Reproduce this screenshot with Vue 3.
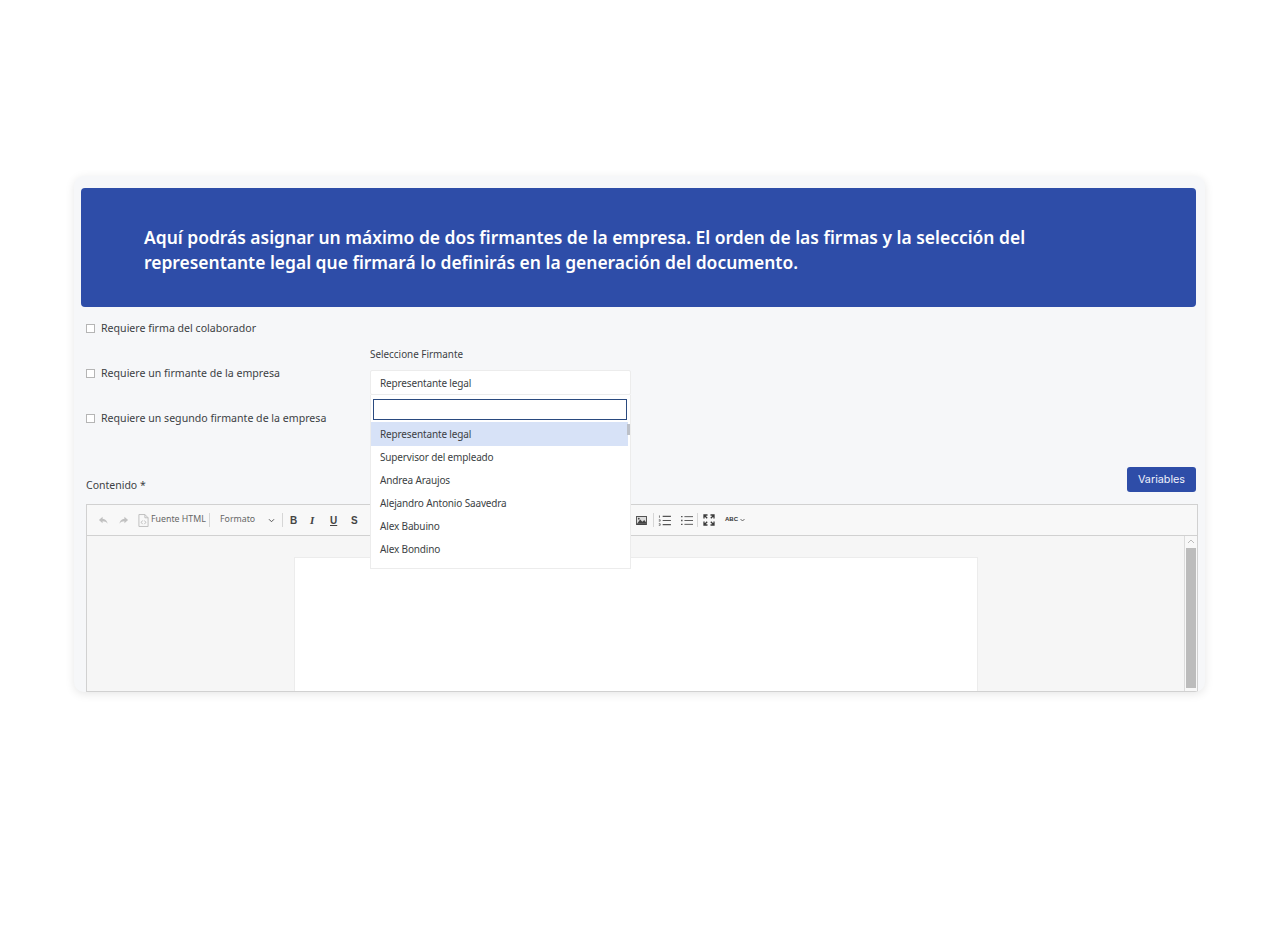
<script setup>
const checks = [
  'Requiere firma del colaborador',
  'Requiere un firmante de la empresa',
  'Requiere un segundo firmante de la empresa'
]
const options = [
  'Representante legal',
  'Supervisor del empleado',
  'Andrea Araujos',
  'Alejandro Antonio Saavedra',
  'Alex Babuino',
  'Alex Bondino'
]
</script>

<template>
  <div class="page">
    <section class="card">
      <div class="banner">
        <p>Aquí podrás asignar un máximo de dos firmantes de la empresa. El orden de las firmas y la selección del representante legal que firmará lo definirás en la generación del documento.</p>
      </div>

      <div class="form">
        <div class="checks">
          <label v-for="c in checks" :key="c" class="check"><span class="box"></span>{{ c }}</label>
        </div>
        <div class="signer">
          <div class="signer-label">Seleccione Firmante</div>
          <div class="select">Representante legal</div>
          <div class="dropdown">
            <div class="search"></div>
            <ul class="list">
              <li v-for="(o, i) in options" :key="o" :class="{ active: i === 0 }">{{ o }}</li>
            </ul>
            <div class="thumb"></div>
          </div>
        </div>
      </div>

      <div class="content-head">
        <span class="content-label">Contenido *</span>
        <button class="variables">Variables</button>
      </div>

      <div class="editor">
        <div class="toolbar">
          <svg class="ic dim" viewBox="0 0 12 12"><path d="M5 2 1 5.500 5 9V6.800c2.400 0 4 .7 5.500 2.700C10 6.300 8 4.400 5 4.200z"/></svg>
          <svg class="ic dim" viewBox="0 0 12 12"><path d="M7 2l4 3.500L7 9V6.800c-2.400 0-4 .7-5.500 2.700C2 6.300 4 4.400 7 4.200z"/></svg>
          <svg class="doc" viewBox="0 0 12 14"><path d="M1 .5h6.500L11 4v9.500H1z M7.500 .5V4H11" fill="none" stroke="#bbb"/><path d="M5 7 3.500 9 5 11M7 7l1.500 2L7 11" fill="none" stroke="#aaa" stroke-width=".8"/></svg>
          <span class="source">Fuente HTML</span>
          <i class="sep s1"></i>
          <span class="format">Formato</span>
          <svg class="chev" viewBox="0 0 8 6"><path d="M1 1.500 4 4.500 7 1.500" fill="none" stroke="#555" stroke-width="1.200"/></svg>
          <i class="sep s2"></i>
          <b class="fmt">B</b>
          <b class="fmt it">I</b>
          <b class="fmt un">U</b>
          <b class="fmt st">S</b>
          <span class="tool-spacer"></span>
          <svg class="img" viewBox="0 0 12 10"><path d="M0 0h12v10H0z" fill="#444"/><path d="M1 1h10v7.500H1z" fill="#ddd"/><path d="M1 8.500 4.500 4 7 6.500l2-2 2 2.500v1.500z" fill="#444"/><circle cx="3" cy="3" r="1" fill="#444"/></svg>
          <i class="sep s3"></i>
          <svg class="list-ic" viewBox="0 0 14 12"><path d="M5 1.500h9M5 6h9M5 10.500h9" stroke="#555" stroke-width="1.100"/><path d="M1.500 .5v2.500M.8 5.200h1.500v1.500H.8M.8 9.500h1.500v1.800H.8" stroke="#555" stroke-width=".8" fill="none"/></svg>
          <svg class="list-ic b2" viewBox="0 0 14 12"><path d="M4 1.500h10M4 6h10M4 10.500h10" stroke="#555" stroke-width="1.100"/><path d="M0 .7h1.800v1.600H0zM0 5.200h1.800v1.600H0zM0 9.700h1.800v1.600H0z" fill="#555"/></svg>
          <i class="sep s4"></i>
          <svg class="max" viewBox="0 0 12 12"><path d="M1 4.500V1h3.500M1 1l3.200 3.200M11 4.500V1H7.500M11 1 7.800 4.200M1 7.500V11h3.500M1 11l3.200-3.200M11 7.500V11H7.500M11 11 7.800 7.800" fill="none" stroke="#3a3a3a" stroke-width="1.300"/></svg>
          <span class="abc">ABC</span>
          <svg class="abc-chev" viewBox="0 0 8 6"><path d="M1 1.500 4 4.500 7 1.500" fill="none" stroke="#444" stroke-width="1.200"/></svg>
        </div>
        <div class="body">
          <div class="sheet-area"><div class="sheet"></div></div>
          <div class="scroll">
            <svg class="up" viewBox="0 0 8 5"><path d="M1 4 4 1 7 4" fill="none" stroke="#bbb"/></svg>
            <div class="bar"></div>
          </div>
        </div>
      </div>
    </section>
  </div>
</template>

<style>
html, body { margin: 0; background: #fff; }
</style>

<style scoped>
.page {
  width: 1280px;
  height: 925px;
  box-sizing: border-box;
  padding: 176px 0 0 74px;
  font-family: "Noto Sans", "Open Sans", sans-serif;
  color: #333;
  overflow: hidden;
}
.card {
  width: 1131px;
  height: 516px;
  box-sizing: border-box;
  padding: 12px 9px 0 7px;
  background: #f6f7f9;
  border-radius: 10px;
  box-shadow: 0 2px 10px rgba(0, 0, 0, .1);
  overflow: hidden;
}
.banner {
  height: 119px;
  box-sizing: border-box;
  padding: 4px 160px 0 63px;
  display: flex;
  align-items: center;
  background: #2e4da8;
  border-radius: 4px;
}
.banner p {
  margin: 0;
  color: #fff;
  font-size: 17.450px;
  font-weight: 600;
  line-height: 25px;
}
.form {
  display: flex;
  height: 160px;
  padding-left: 5px;
}
.checks {
  width: 284px;
  padding-top: 12px;
  display: flex;
  flex-direction: column;
  gap: 27px;
}
.check {
  display: flex;
  align-items: center;
  height: 18px;
  font-size: 10.600px;
  color: #3c3f44;
}
.box {
  width: 7px;
  height: 7px;
  border: 1px solid #b5b5b5;
  background: #fff;
  margin-right: 6px;
}
.signer {
  position: relative;
  width: 261px;
  padding-top: 40px;
}
.signer-label {
  font-size: 9.900px;
  line-height: 15px;
  color: #3c3f44;
  margin-bottom: 8px;
}
.select {
  height: 25px;
  box-sizing: border-box;
  padding-left: 9px;
  font-size: 10px;
  letter-spacing: -.15px;
  line-height: 25px;
  color: #3c3f44;
  background: #fff;
  border: 1px solid #ececec;
  border-radius: 2px;
}
.dropdown {
  position: absolute;
  left: 0;
  top: 88px;
  width: 261px;
  height: 174px;
  background: #fff;
  border: 1px solid #ececec;
  border-top: 0;
  box-sizing: border-box;
  z-index: 5;
}
.search {
  height: 21px;
  margin: 4px 3px 2px 2px;
  box-sizing: border-box;
  border: 1px solid #2a4a7f;
  background: #fff;
}
.list {
  list-style: none;
  margin: 0;
  padding: 0;
  width: 257px;
}
.list li {
  height: 23px;
  line-height: 23px;
  padding-left: 9px;
  font-size: 10px;
  letter-spacing: -.15px;
  color: #3c3f44;
}
.list li.active { background: #d7e2f7; height: 24px; line-height: 25px; }
.thumb {
  position: absolute;
  right: 0;
  top: 29px;
  width: 3px;
  height: 11px;
  background: #bcc0c8;
}
.content-head {
  display: flex;
  align-items: center;
  justify-content: space-between;
  padding-left: 5px;
  height: 25px;
  font-size: 10.500px;
  color: #3c3f44;
}
.content-label { padding-top: 10px; }
.variables {
  width: 69px;
  height: 25px;
  padding: 0;
  border: 0;
  border-radius: 3px;
  background: #2e4da8;
  color: #eef1fb;
  font: 400 10.800px Inter, sans-serif;
}
.editor {
  width: 1112px;
  height: 188px;
  margin: 12px 0 0 5px;
  box-sizing: border-box;
  border: 1px solid #d1d1d1;
  background: #f6f6f6;
}
.toolbar {
  height: 31px;
  position: relative;
  display: flex;
  align-items: center;
  box-sizing: border-box;
  background: #f8f8f8;
  border-bottom: 1px solid #d1d1d1;
  padding-left: 11px;
  font-size: 8.800px;
  color: #666;
  white-space: nowrap;
}
.ic { width: 11px; height: 11px; margin-right: 9px; fill: #c1c1c1; flex: none; }
.doc { width: 11px; height: 13px; margin: 0 3px 0 0; flex: none; }
.source { width: 57px; flex: none; margin: -2px 1px 0 -1px; }
.sep { width: 1px; height: 14px; background: #d6d6d6; flex: none; }
.format { margin-left: 10px; width: 41px; flex: none; margin-top: -2px; }
.chev { width: 7px; height: 5px; margin-left: 7px; flex: none; }
.s2 { margin-left: 7px; margin-right: 7px; }
.fmt {
  width: 20px;
  flex: none;
  font: 700 10px "Liberation Sans", sans-serif;
  color: #444;
}
.fmt.it { font-style: italic; font-family: "Liberation Serif", serif; font-size: 11px; }
.fmt.un { text-decoration: underline; width: 21px; }
.fmt.st { width: 9px; }
.tool-spacer { width: 276px; flex: none; }
.img { width: 11px; height: 9px; margin-right: 6px; flex: none; }
.s3 { margin-right: 4px; }
.list-ic { width: 13px; height: 11px; margin-right: 10px; flex: none; }
.list-ic.b2 { width: 12px; margin-right: 4px; }
.s4 { margin-right: 5px; }
.max { width: 12px; height: 12px; margin-right: 10px; flex: none; }
.abc { font: 700 6px "Liberation Sans", sans-serif; color: #333; margin-top: -3px; }
.abc-chev { width: 7px; height: 4px; margin-left: 1px; flex: none; }
.body { display: flex; height: 155px; }
.sheet-area { flex: 1; padding: 21px 0 0 207px; background: #f6f6f6; }
.sheet { width: 684px; height: 134px; background: #fff; border: 1px solid #ececec; border-bottom: 0; box-sizing: border-box; }
.scroll {
  width: 12px;
  background: #f8f8f8;
  border-left: 1px solid #dcdcdc;
  display: flex;
  flex-direction: column;
  align-items: center;
}
.up { width: 8px; height: 5px; margin: 3px 0 4px; flex: none; }
.bar { width: 10px; height: 140px; background: #bcbcbc; flex: none; }
</style>
